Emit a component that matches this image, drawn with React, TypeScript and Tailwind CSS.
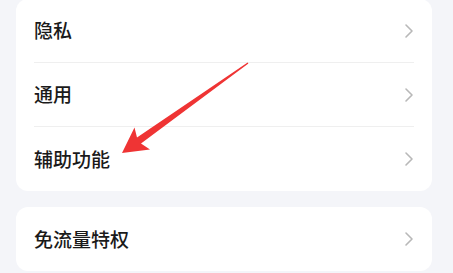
import { ChevronRight } from "lucide-react";

const groups = [["隐私", "通用", "辅助功能"], ["免流量特权"]];

function Row({ label, last }: { label: string; last: boolean }) {
  return (
    <div className="px-[18px]">
      <div
        className={
          last
            ? "flex h-16 items-center justify-between"
            : "flex h-16 items-center justify-between border-b border-[#efefef]"
        }
      >
        <span className="text-[19px] font-medium text-[#1a1a1a]">{label}</span>
        <ChevronRight className="mr-[-7px] h-6 w-6 text-[#b8b8b8]" strokeWidth={1.6} />
      </div>
    </div>
  );
}

export default function App() {
  return (
    <div
      className="relative h-[273px] w-[453px] overflow-hidden bg-[#f4f5f9] pl-4 pr-[21px]"
      style={{ fontFamily: '"Noto Sans CJK SC", "Noto Sans", sans-serif' }}
    >
      <div className="-mt-px flex flex-col gap-4">
        {groups.map((rows, i) => (
          <div key={i} className="rounded-xl bg-white">
            {rows.map((label, j) => (
              <Row key={label} label={label} last={j === rows.length - 1} />
            ))}
          </div>
        ))}
      </div>

      <svg
        className="pointer-events-none absolute left-0 top-0"
        width="453"
        height="273"
        viewBox="0 0 453 273"
      >
        <polygon
          points="122,153 134.5,127.5 137,137.5 247.6,62.4 248.4,63.6 141,143.5 150,149.5"
          fill="#ef3434"
        />
      </svg>
    </div>
  );
}
